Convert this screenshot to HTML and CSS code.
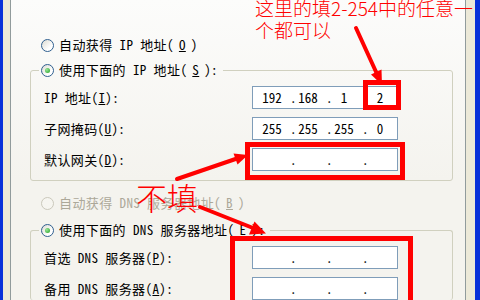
FILE: index.html
```html
<!DOCTYPE html>
<html lang="zh-CN">
<head>
    <meta charset="UTF-8">
    <meta name="viewport" content="width=device-width, initial-scale=1.0">
    <title>Internet 协议 (TCP/IP) 属性</title>
    <link rel="stylesheet" href="styles.css">
</head>
<body>
    <div class="frame">
        <div class="page">
            <div class="opt top-opt"><span class="radio"></span>自动获得 IP 地址(<u>O</u>)</div>

            <fieldset class="group">
                <legend class="opt"><span class="radio checked"></span>使用下面的 IP 地址(<u>S</u>):</legend>
                <div class="rows">
                    <span class="lbl">IP 地址(<u>I</u>):</span>
                    <div class="ip"><span class="oct">192</span><span class="dot">.</span><span class="oct">168</span><span class="dot">.</span><span class="oct">1</span><span class="dot">.</span><span class="oct">2</span></div>
                    <span class="lbl">子网掩码(<u>U</u>):</span>
                    <div class="ip"><span class="oct">255</span><span class="dot">.</span><span class="oct">255</span><span class="dot">.</span><span class="oct">255</span><span class="dot">.</span><span class="oct">0</span></div>
                    <span class="lbl">默认网关(<u>D</u>):</span>
                    <div class="ip"><span class="oct"></span><span class="dot">.</span><span class="oct"></span><span class="dot">.</span><span class="oct"></span><span class="dot">.</span><span class="oct"></span></div>
                </div>
            </fieldset>

            <div class="opt off dns-opt"><span class="radio"></span>自动获得 DNS 服务器地址(<u>B</u>)</div>

            <fieldset class="group group-dns">
                <legend class="opt"><span class="radio checked"></span>使用下面的 DNS 服务器地址(<u>E</u>):</legend>
                <div class="rows">
                    <span class="lbl">首选 DNS 服务器(<u>P</u>):</span>
                    <div class="ip"><span class="oct"></span><span class="dot">.</span><span class="oct"></span><span class="dot">.</span><span class="oct"></span><span class="dot">.</span><span class="oct"></span></div>
                    <span class="lbl">备用 DNS 服务器(<u>A</u>):</span>
                    <div class="ip"><span class="oct"></span><span class="dot">.</span><span class="oct"></span><span class="dot">.</span><span class="oct"></span><span class="dot">.</span><span class="oct"></span></div>
                </div>
            </fieldset>
        </div>
    </div>

    <!-- 红色标注 -->
    <svg class="marks" width="480" height="300" viewBox="0 0 480 300">
        <g fill="none" stroke="#f00" stroke-width="5">
            <rect x="365.5" y="82.5" width="33" height="25"/>
            <rect x="247.5" y="144.5" width="155" height="33"/>
            <rect x="232.5" y="238.5" width="178" height="80"/>
        </g>
        <g stroke="#f00" stroke-width="4" stroke-linecap="round">
            <line x1="356" y1="28" x2="377" y2="74"/>
            <line x1="177" y1="179" x2="237" y2="158.5"/>
            <line x1="200" y1="207" x2="253" y2="228"/>
        </g>
        <g fill="#f00">
            <polygon points="382,85 381.5,69.5 371,74.5"/>
            <polygon points="248,155 237.5,164.5 233.5,153.5"/>
            <polygon points="266,233.5 249,234.5 254.5,221.5"/>
        </g>
    </svg>
    <div class="note note-top">这里的填2-254中的任意一<br>个都可以</div>
    <div class="note note-skip">不填</div>
</body>
</html>
```

FILE: styles.css
```css
html, body {
    margin: 0;
    padding: 0;
}

body {
    width: 480px;
    height: 300px;
    overflow: hidden;
    position: relative;
    font-family: "Noto Sans Mono CJK SC", "Noto Sans CJK SC", sans-serif;
    font-size: 13px;
    letter-spacing: 0.4px;
    color: #000;
}

/* 窗口边框 */
.frame {
    display: flex;
    height: 300px;
    box-sizing: border-box;
    background: #ece9d8;
    border-left: 3px solid #0831d9;
    border-right: 5px solid #0831d9;
    padding: 0 9px 0 7px;
}

.page {
    flex: 1;
    border-left: 1px solid #919b9c;
    border-right: 1px solid #919b9c;
    background: linear-gradient(#fcfcfb, #f4f3ee 60%);
}

/* 单选项 */
.opt {
    display: flex;
    align-items: center;
    gap: 5px;
    height: 16px;
    line-height: 16px;
    white-space: nowrap;
}

.top-opt {
    margin: 37px 0 0 30px;
}

.dns-opt {
    margin: 14px 0 0 30px;
}

.off {
    color: #aca899;
}

.radio {
    flex: none;
    width: 13px;
    height: 13px;
    box-sizing: border-box;
    border: 1px solid #2f5f8f;
    border-radius: 50%;
    background: linear-gradient(135deg, #dcdbd2, #ffffff 70%);
    display: flex;
    align-items: center;
    justify-content: center;
}

.radio.checked::after {
    content: "";
    width: 5px;
    height: 5px;
    border-radius: 50%;
    background: radial-gradient(circle at 35% 35%, #9ae69a, #1f9f1f);
}

.off .radio {
    border-color: #cac8bb;
    background: #f6f5f0;
}

/* 分组框 */
.group {
    margin: 9px 12px 0 19px;
    padding: 8px 0 9px 0;
    min-width: 0;
    border: 1px solid #d0d0bf;
    border-radius: 3px;
}

.group-dns {
    margin-top: 11px;
    padding-bottom: 0;
    border-bottom: none;
}

.group legend {
    margin-left: 8px;
    padding: 0 5px 0 2px;
}

.rows {
    display: grid;
    grid-template-columns: 208px 146px;
    grid-auto-rows: 23px;
    row-gap: 8px;
    align-items: center;
    padding-left: 13px;
}

.lbl {
    white-space: nowrap;
}

/* IP 输入框 */
.ip {
    display: flex;
    align-items: center;
    height: 23px;
    box-sizing: border-box;
    padding: 0 1px;
    border: 1px solid #7f9db9;
    background: #fff;
    letter-spacing: 0;
}

.oct {
    flex: none;
    width: 36px;
    text-align: center;
}

.dot {
    flex: none;
    width: 0;
    white-space: nowrap;
}

/* 标注 */
.marks {
    position: absolute;
    top: 0;
    left: 0;
    pointer-events: none;
}

.note {
    position: absolute;
    color: #f00;
    font-family: "Noto Sans CJK SC", sans-serif;
    font-weight: 300;
    letter-spacing: 0;
    white-space: nowrap;
}

.note-top {
    left: 255px;
    top: -3px;
    font-size: 19px;
    line-height: 22px;
}

.note-skip {
    left: 136px;
    top: 181px;
    font-size: 31px;
    line-height: 31px;
}
```
